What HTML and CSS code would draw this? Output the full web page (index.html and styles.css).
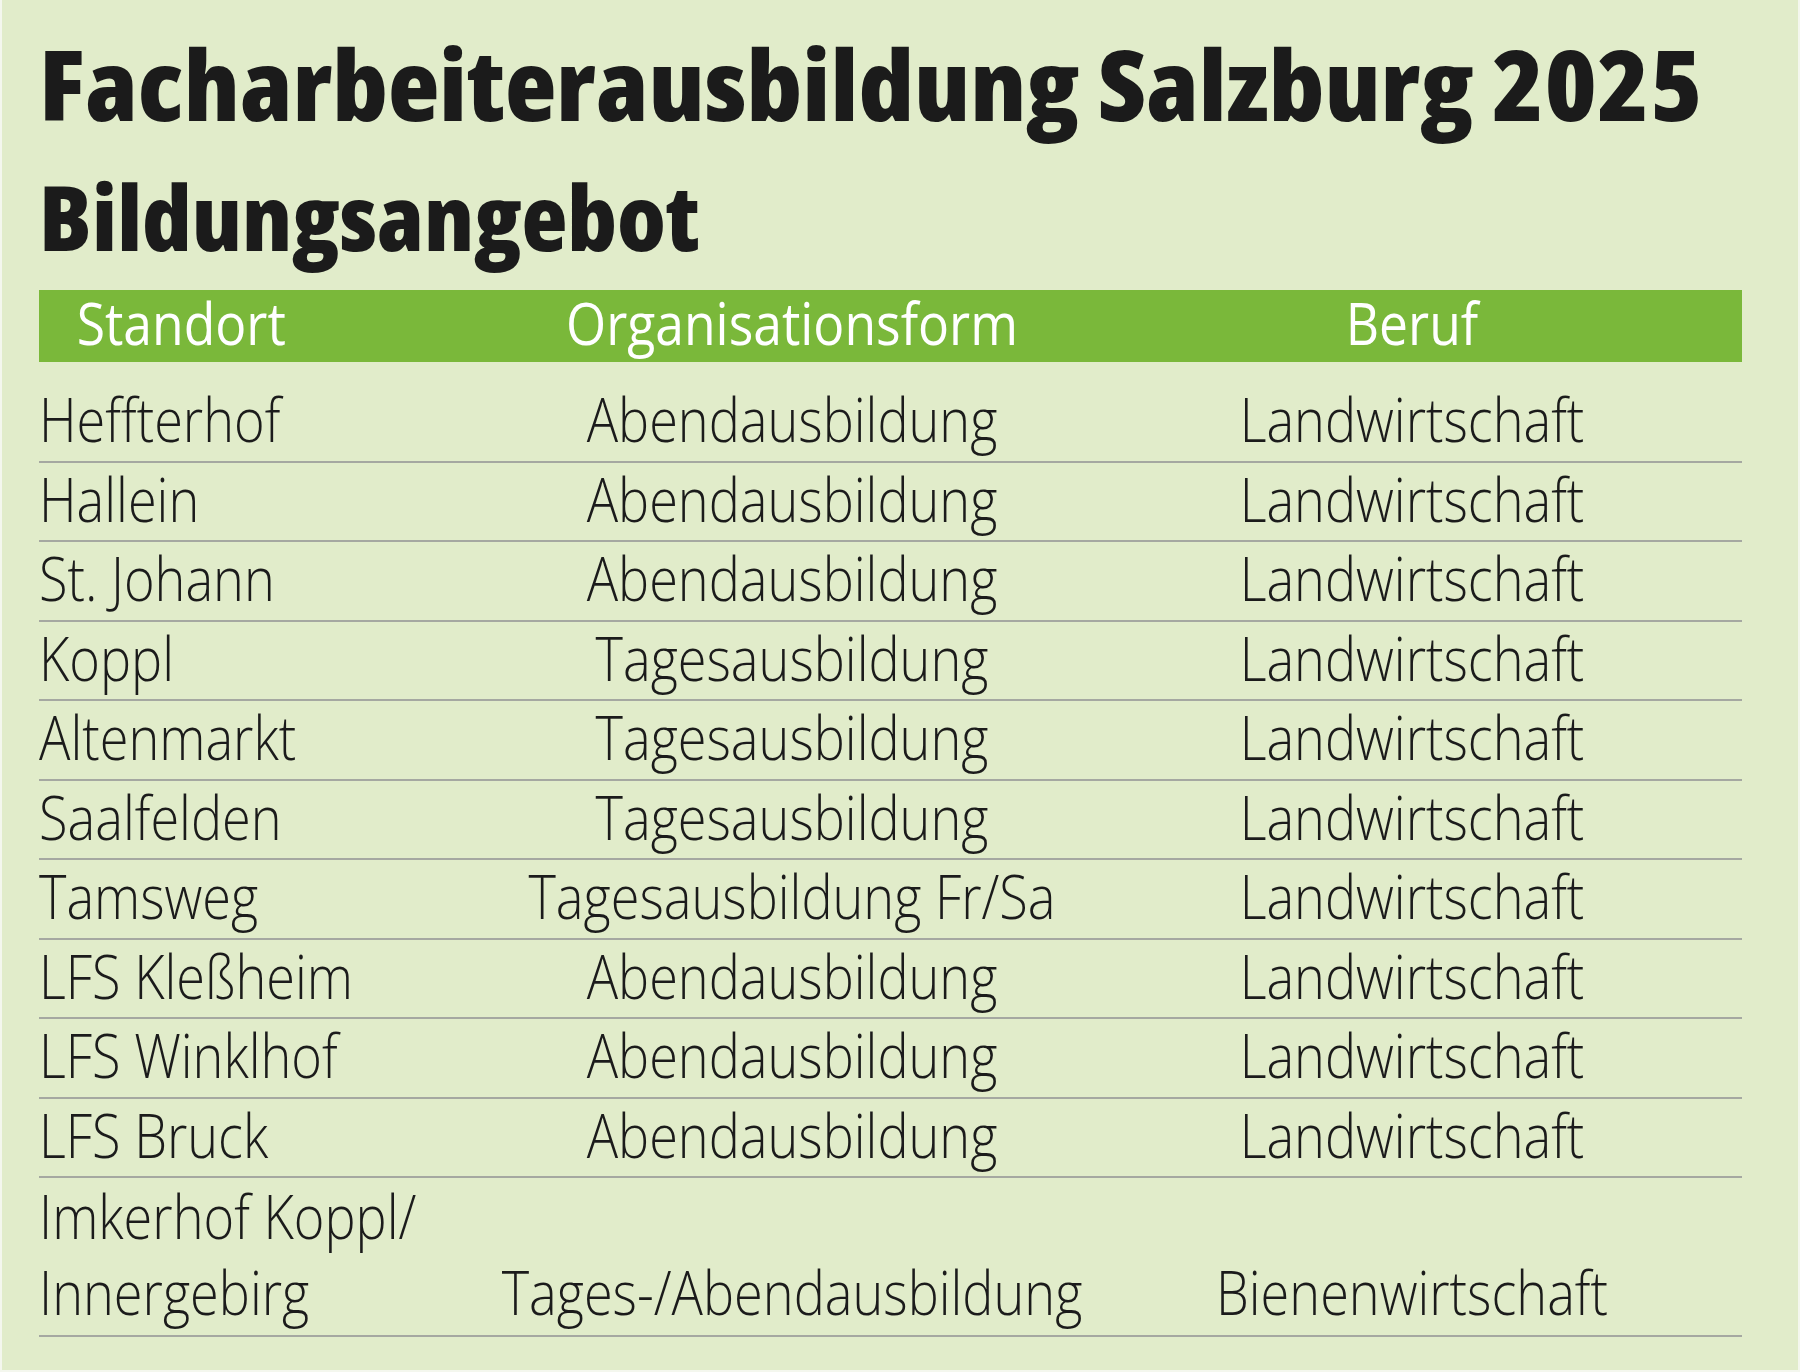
FILE: index.html
```html
<!DOCTYPE html>
<html lang="de">
<head>
<meta charset="utf-8">
<title>Facharbeiterausbildung Salzburg 2025</title>
<link rel="stylesheet" href="styles.css">
</head>
<body>
<div class="page">
  <h1 class="title">Facharbeiterausbildung Salzburg 2025</h1>
  <h2 class="subtitle">Bildungsangebot</h2>
  <div class="table">
    <div class="head">
      <div class="hc hc-first">Standort</div>
      <div class="hc">Organisationsform</div>
      <div class="hc">Beruf</div>
    </div>
    <div class="row row-first"><div class="c1">Heffterhof</div><div class="c2">Abendausbildung</div><div class="c3">Landwirtschaft</div></div>
    <div class="row"><div class="c1">Hallein</div><div class="c2">Abendausbildung</div><div class="c3">Landwirtschaft</div></div>
    <div class="row"><div class="c1">St. Johann</div><div class="c2">Abendausbildung</div><div class="c3">Landwirtschaft</div></div>
    <div class="row"><div class="c1">Koppl</div><div class="c2">Tagesausbildung</div><div class="c3">Landwirtschaft</div></div>
    <div class="row"><div class="c1">Altenmarkt</div><div class="c2">Tagesausbildung</div><div class="c3">Landwirtschaft</div></div>
    <div class="row"><div class="c1">Saalfelden</div><div class="c2">Tagesausbildung</div><div class="c3">Landwirtschaft</div></div>
    <div class="row"><div class="c1">Tamsweg</div><div class="c2">Tagesausbildung Fr/Sa</div><div class="c3">Landwirtschaft</div></div>
    <div class="row"><div class="c1">LFS Kleßheim</div><div class="c2">Abendausbildung</div><div class="c3">Landwirtschaft</div></div>
    <div class="row"><div class="c1">LFS Winklhof</div><div class="c2">Abendausbildung</div><div class="c3">Landwirtschaft</div></div>
    <div class="row"><div class="c1">LFS Bruck</div><div class="c2">Abendausbildung</div><div class="c3">Landwirtschaft</div></div>
    <div class="row row-tall"><div class="c1">Imkerhof Koppl/<br>Innergebirg</div><div class="c2">Tages-/Abendausbildung</div><div class="c3">Bienenwirtschaft</div></div>
  </div>
</div>
</body>
</html>
```
FILE: styles.css
```css
html, body {
  margin: 0;
  padding: 0;
  background: #f4f7ee;
}

.page {
  box-sizing: border-box;
  width: 1800px;
  height: 1372px;
  overflow: hidden;
  background: #e1ecca;
  border-left: 2px solid #f4f7ee;
  border-right: 2px solid #f4f7ee;
  border-bottom: 2px solid #f4f7ee;
  padding: 25px 56px 0 37px;
  color: #1b1b1b;
  font-family: "Open Sans", "Noto Sans", "DejaVu Sans", sans-serif;
}

.title {
  width: max-content;
  margin: 0;
  font-size: 97px;
  line-height: 116px;
  font-weight: 800;
  font-stretch: 75%;
  white-space: nowrap;
  transform: scaleX(1.095);
  transform-origin: left center;
}

.subtitle {
  width: max-content;
  margin: 17px 0 0;
  font-size: 91px;
  line-height: 116px;
  font-weight: 800;
  font-stretch: 75%;
  white-space: nowrap;
  transform: scaleX(1.043);
  transform-origin: left center;
}

.table {
  margin-top: 16px;
}

.head,
.row {
  display: grid;
  grid-template-columns: 463px 580px 1fr;
}

.head {
  background: #7ab83a;
  color: #ffffff;
  height: 72px;
  box-sizing: border-box;
  padding-bottom: 8px;
}

.hc {
  font-size: 59px;
  line-height: 64px;
  font-weight: 500;
  text-align: center;
  white-space: nowrap;
  transform: scaleX(0.875);
  transform-origin: center;
}

.hc-first {
  text-align: left;
  padding-left: 43px;
  transform-origin: left center;
}

.row {
  font-size: 60px;
  line-height: 72.5px;
  font-weight: 300;
  padding-bottom: 5px;
  border-bottom: 2px solid #a5a8a1;
  white-space: nowrap;
}

.row-first {
  margin-top: 21px;
}

.row-tall {
  line-height: 76px;
}

.c1,
.c2,
.c3 {
  transform: scaleX(0.871);
}

.c1 {
  text-align: left;
  transform-origin: left center;
}

.c2,
.c3 {
  margin: 0 -80px;
  text-align: center;
  align-self: end;
  transform-origin: center;
}
```
